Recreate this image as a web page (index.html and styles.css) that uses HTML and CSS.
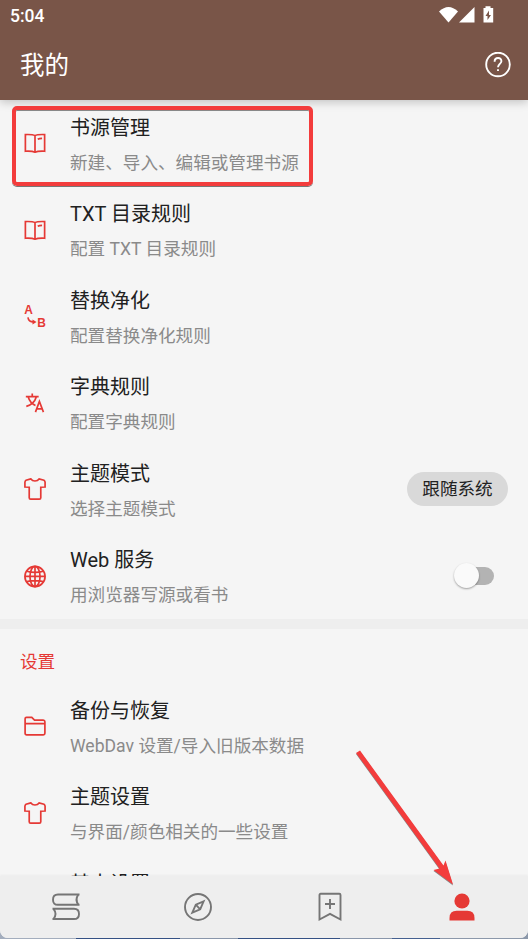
FILE: index.html
```html
<!DOCTYPE html>
<html lang="zh-CN">
<head>
<meta charset="utf-8">
<title>我的</title>
<link rel="stylesheet" href="styles.css">
</head>
<body>
<svg class="defs" width="0" height="0">
  <symbol id="book" viewBox="0 0 24 24"><path d="M12 4C10 2.800 7 2.600 1.500 2.800v18.200c5-.2 8.300 0 10.500 1 2.200-1 5.500-1.200 10.500-1V2.800C17 2.600 14 2.800 12 4v18M15 7.800c1.200-.7 2.700-.9 4.700-.9"/></symbol>
  <symbol id="shirt" viewBox="0 0 24 24"><path d="M7.500 1 2.200 2.500Q1.300 3 1 4.500V9.800l4.700.3v11.400q0 1.500 1.500 1.500h9.600q1.500 0 1.500-1.500V10.100l4.700-.3V4.500q-.3-1.500-1.200-2L16.500 1c-2 3-7 3-9 0Z"/></symbol>
</svg>
<div class="phone">
  <header class="topbar">
    <div class="status">
      <span>5:04</span>
      <svg class="status-icons" width="56" height="20" viewBox="0 0 56 20">
        <path d="M0 4.500Q9.500-4.500 19 4.500L9.500 15.500Z"/>
        <path d="M35.500 0v15.500H20Z"/>
        <path fill-rule="evenodd" d="M46.500-.8h5v1.800h2.700v14.500H44.500V1h2ZM50 3.500 46.500 9h2v4L52 8h-2Z"/>
      </svg>
    </div>
    <div class="titlebar">
      <h1>我的</h1>
      <svg class="help" width="26" height="26" viewBox="0 0 26 26"><circle cx="13" cy="12.500" r="11.800"/><path d="M9.600 9.700c0-5 7-4.600 6.800-.5-.1 2.500-3.400 3-3.400 6"/><path d="M13 17.200v1.900"/></svg>
    </div>
  </header>
  <main class="list">
    <section>
      <div class="row"><svg class="icon"><use href="#book"/></svg><div class="text"><h2>书源管理</h2><p>新建、导入、编辑或管理书源</p></div></div>
      <div class="row"><svg class="icon"><use href="#book"/></svg><div class="text"><h2>TXT 目录规则</h2><p>配置 TXT 目录规则</p></div></div>
      <div class="row"><svg class="icon" viewBox="0 0 24 24"><text class="glyph" x=".3" y="10">A</text><text class="glyph" x="14.500" y="23.700">B</text><path d="M4.300 13.500c.5 3.300 2.500 5 6 5"/><path class="solid" d="m9.300 15.700 4.400 2.800-4.400 2.800Z"/></svg><div class="text"><h2>替换净化</h2><p>配置替换净化规则</p></div></div>
      <div class="row"><svg class="icon" viewBox="0 0 24 24"><path d="M2 5h14M9 1.500V5M4.500 5.200c1.200 4 4.500 8 8 9.500M13.500 5.200C12 10.200 8 14.200 2.500 15.700M12.500 22l4.300-11.700L21.200 22M14 18.500h5.700"/></svg><div class="text"><h2>字典规则</h2><p>配置字典规则</p></div></div>
      <div class="row"><svg class="icon"><use href="#shirt"/></svg><div class="text"><h2>主题模式</h2><p>选择主题模式</p></div><span class="chip">跟随系统</span></div>
      <div class="row"><svg class="icon" viewBox="0 0 24 24"><circle cx="12" cy="12.500" r="11"/><ellipse cx="12" cy="12.500" rx="5.500" ry="11"/><path d="M12 1.500v22M1 12.500h22M3 6.800q9 2.500 18 0M3 18.200q9-2.500 18 0"/></svg><div class="text"><h2>Web 服务</h2><p>用浏览器写源或看书</p></div><span class="switch"></span></div>
    </section>
    <section class="settings">
      <h3>设置</h3>
      <div class="row"><svg class="icon" viewBox="0 0 24 24"><path d="M1.200 20V4Q1.200 2.500 2.700 2.500H8.500L11.500 5.500H21q1.800 0 1.800 1.800v12.700q0 1.700-1.700 1.700H2.900q-1.700 0-1.700-1.700ZM1.200 9.500h21.600"/></svg><div class="text"><h2>备份与恢复</h2><p>WebDav 设置/导入旧版本数据</p></div></div>
      <div class="row"><svg class="icon"><use href="#shirt"/></svg><div class="text"><h2>主题设置</h2><p>与界面/颜色相关的一些设置</p></div></div>
      <div class="row"><span class="icon"></span><div class="text"><h2>基本设置</h2></div></div>
    </section>
  </main>
  <nav class="nav">
    <svg viewBox="0 0 30 30"><path d="M28.500 2.500H7Q2 2.500 2 7.700T7 12.800h21.500M27.500 2.500q-4 5 0 10.300M1.500 16.800H23q5 0 5 5.100T23 27H1.500M2.500 16.800q4 5 0 10.200"/></svg>
    <svg viewBox="0 0 30 30"><circle cx="15" cy="15" r="13"/><path d="M20.600 9.300 12.800 12.700 9.300 20.700 17.200 17.300ZM12.800 12.700l4.400 4.600"/></svg>
    <svg viewBox="0 0 30 30"><path d="M4.500 3q0-1.200 1.200-1.200h18.600q1.200 0 1.200 1.200v24.500L15 21.800 4.500 27.500ZM15 7v10M10 12h10"/></svg>
    <svg class="active" viewBox="0 0 30 30"><circle cx="15" cy="9" r="7.600"/><path d="M2.500 28.600V26q0-7.200 7.200-7.200h10.600q7.200 0 7.200 7.200v2.600Z"/></svg>
  </nav>
</div>
<div class="highlight"></div>
<svg class="arrow" width="110" height="144" viewBox="0 0 110 144"><path class="arrow-shade" d="M1 4 5 1.500 88.500 116.500 90.500 111.500 98 135.500 78.500 121 84.500 119.500Z"/><path d="M1 3 5 .5 88.500 115.500 90.500 110.500 98 134.500 78.500 120 84.500 118.500Z"/></svg>
</body>
</html>
```

FILE: styles.css
```css
* { box-sizing: border-box; }
body {
  margin: 0;
  background: linear-gradient(90deg, #a3adbd 0 76px, #345184 76px 180px, #8996aa 180px 238px, #345184 238px 340px, #8996aa 340px 392px, #456090 392px 440px, #8c98aa 440px);
  font-family: Roboto, "Noto Sans CJK SC", sans-serif;
}
h1, h2, h3, p { margin: 0; font-weight: 400; }
.defs { position: absolute; }
.phone {
  display: flex;
  flex-direction: column;
  height: 938px;
  overflow: hidden;
  background: #f5f5f5;
  border-radius: 0 0 8px 8px;
}
.topbar {
  flex: none;
  z-index: 1;
  height: 100px;
  color: #fff;
  background: #795548;
  box-shadow: 0 2px 9px rgba(0, 0, 0, .22);
}
.status {
  display: flex;
  justify-content: space-between;
  height: 32px;
  padding: 0 33px 0 10px;
  font-size: 17.5px;
  font-weight: 500;
  line-height: 32px;
}
.status-icons { margin-top: 7px; fill: #fff; overflow: visible; }
.titlebar {
  display: flex;
  justify-content: space-between;
  align-items: center;
  height: 66px;
  padding: 0 17px 0 20px;
}
h1 { padding-top: 2px; font-size: 24.500px; line-height: 36px; }
.help { fill: none; stroke: #fff; stroke-width: 1.900; }
.list { flex: 1; min-height: 0; overflow: hidden; }
.row {
  display: flex;
  align-items: center;
  height: 86.500px;
  padding: 0 20px 0 24px;
}
.icon {
  flex: none;
  width: 22px;
  height: 22px;
  margin-right: 24px;
  fill: none;
  stroke: #e53935;
  stroke-width: 1.850;
  overflow: visible;
}
.solid { fill: #e53935; stroke: none; }
.glyph { fill: #e53935; stroke: none; font: 700 13px "Liberation Sans", sans-serif; }
.text { flex: 1; height: 76px; padding-top: 7.500px; white-space: nowrap; }
h2 { height: 30px; font-size: 20px; line-height: 30px; color: #212121; }
p { margin-top: 6px; height: 28px; font-size: 17.600px; line-height: 28px; color: #8a8a8a; }
.chip {
  width: 101px;
  height: 34px;
  border-radius: 17px;
  background: #d9d9d9;
  color: #212121;
  font-size: 17.600px;
  line-height: 35px;
  text-align: center;
}
.switch {
  width: 35px;
  height: 18px;
  margin-right: 14px;
  border-radius: 9px;
  background: #b3b3b3;
}
.switch::before {
  content: "";
  display: block;
  width: 25px;
  height: 25px;
  margin: -4px 0 0 -5px;
  border-radius: 50%;
  background: #fafafa;
  box-shadow: 0 1px 2px rgba(0, 0, 0, .35);
}
.settings { border-top: 10px solid #eee; }
h3 { height: 54px; padding-left: 20px; color: #e53935; font-size: 17.600px; line-height: 66px; }
.nav {
  flex: none;
  z-index: 1;
  display: grid;
  grid-template-columns: repeat(4, 1fr);
  place-items: center;
  height: 62px;
  background: #eee;
  box-shadow: 0 -1px 2px rgba(0, 0, 0, .04);
}
.nav svg { width: 30px; height: 30px; fill: none; stroke: #757575; stroke-width: 1.900; }
.nav .active { fill: #e53935; stroke: none; }
.highlight {
  position: absolute;
  z-index: 2;
  left: 12px;
  top: 106px;
  width: 301px;
  height: 80px;
  border: 4px solid #f33c3c;
  border-radius: 5px;
  box-shadow: 0 1px 0 #777, inset 0 1px 0 #888;
}
.arrow { position: absolute; z-index: 2; left: 355px; top: 750px; fill: #f33c3c; }
.arrow-shade { fill: #888; }
```
